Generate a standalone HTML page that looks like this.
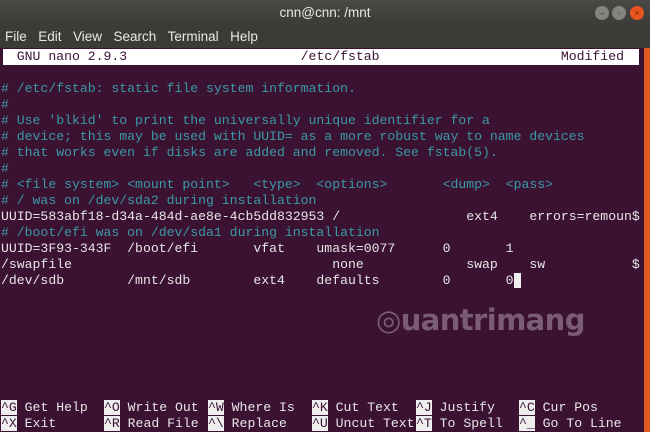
<!DOCTYPE html>
<html><head><meta charset="utf-8"><style>
*{margin:0;padding:0;box-sizing:border-box}
body{width:650px;height:432px;overflow:hidden;background:#3b1232;position:relative;font-family:"Liberation Sans",sans-serif}
#title{position:absolute;left:0;top:0;width:650px;height:25px;background:linear-gradient(#4a4944,#3c3b37);color:#e8e8e6;font-size:13.5px;text-align:center;line-height:25px}
#menu{position:absolute;left:0;top:25px;width:650px;height:23px;background:#3c3b37;color:#e8e8e6;font-size:13.5px;line-height:23px;padding-left:5px;word-spacing:2px}
.btn{position:absolute;top:6px;width:14px;height:14px;border-radius:7px;background:#86847e;color:#4a4944;font-size:9px;line-height:14px;text-align:center}
#orange{position:absolute;left:644px;top:48px;width:6px;height:384px;background:#e05a26}
.r{position:absolute;left:1px;font-family:"Liberation Mono",monospace;font-size:13.15px;white-space:pre;color:#e6e6e6;line-height:16px;height:16px}
.c{color:#3b9aa6}
#hdr{position:absolute;left:3px;top:49px;width:636px;height:16px;background:#fff}
.k{background:#eee;color:#3b1232}
#logo{position:absolute;left:376px;top:303px;color:#7a5c76;font-family:"DejaVu Sans",sans-serif;font-weight:bold;font-size:29px;letter-spacing:-0.6px}
</style></head><body>
<div id="title">cnn@cnn: /mnt</div>
<div class="btn" style="left:595px">–</div>
<div class="btn" style="left:612px">▫</div>
<div class="btn" style="left:630px;background:#e95420;color:#7a2a10">×</div>
<div id="menu">File&nbsp; Edit&nbsp; View&nbsp; Search&nbsp; Terminal&nbsp; Help</div>
<div id="orange"></div>
<div id="hdr"></div>
<div class="r" style="top:49px;color:#3b1232">  GNU nano 2.9.3                      /etc/fstab                       Modified</div>
<div class="r c" style="top:81px"># /etc/fstab: static file system information.</div>
<div class="r c" style="top:97px">#</div>
<div class="r c" style="top:113px"># Use 'blkid' to print the universally unique identifier for a</div>
<div class="r c" style="top:129px"># device; this may be used with UUID= as a more robust way to name devices</div>
<div class="r c" style="top:145px"># that works even if disks are added and removed. See fstab(5).</div>
<div class="r c" style="top:161px">#</div>
<div class="r c" style="top:177px"># &lt;file system&gt; &lt;mount point&gt;   &lt;type&gt;  &lt;options&gt;       &lt;dump&gt;  &lt;pass&gt;</div>
<div class="r c" style="top:193px"># / was on /dev/sda2 during installation</div>
<div class="r" style="top:209px">UUID=583abf18-d34a-484d-ae8e-4cb5dd832953 /                ext4    errors=remoun$</div>
<div class="r c" style="top:225px"># /boot/efi was on /dev/sda1 during installation</div>
<div class="r" style="top:241px">UUID=3F93-343F  /boot/efi       vfat    umask=0077      0       1</div>
<div class="r" style="top:257px">/swapfile                                 none             swap    sw           $</div>
<div class="r" style="top:273px">/dev/sdb        /mnt/sdb        ext4    defaults        0       0<span class="k"> </span></div>
<div id="logo">◎uantrimang</div>
<div class="r" style="top:400px;left:1px"><span class="k">^G</span> Get Help</div>
<div class="r" style="top:416px;left:1px"><span class="k">^X</span> Exit</div>
<div class="r" style="top:400px;left:104px"><span class="k">^O</span> Write Out</div>
<div class="r" style="top:416px;left:104px"><span class="k">^R</span> Read File</div>
<div class="r" style="top:400px;left:208px"><span class="k">^W</span> Where Is</div>
<div class="r" style="top:416px;left:208px"><span class="k">^\</span> Replace</div>
<div class="r" style="top:400px;left:312px"><span class="k">^K</span> Cut Text</div>
<div class="r" style="top:416px;left:312px"><span class="k">^U</span> Uncut Text</div>
<div class="r" style="top:400px;left:416px"><span class="k">^J</span> Justify</div>
<div class="r" style="top:416px;left:416px"><span class="k">^T</span> To Spell</div>
<div class="r" style="top:400px;left:519px"><span class="k">^C</span> Cur Pos</div>
<div class="r" style="top:416px;left:519px"><span class="k">^_</span> Go To Line</div>
</body></html>
